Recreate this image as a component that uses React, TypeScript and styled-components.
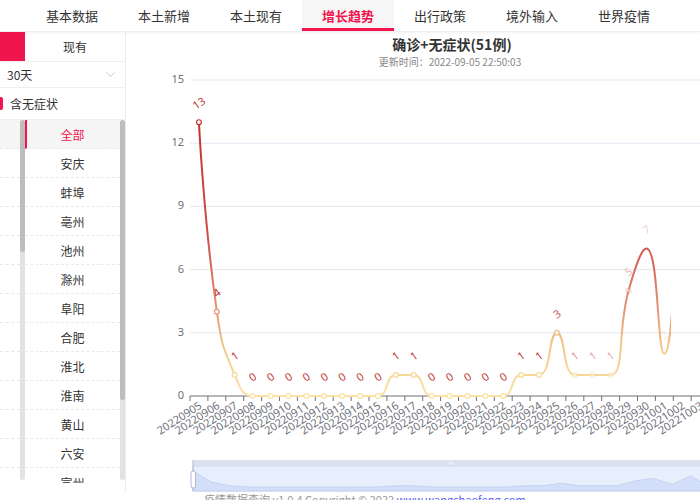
import React from "react";
import styled, { createGlobalStyle } from "styled-components";
import { ChevronDown } from "lucide-react";

const GlobalStyle = createGlobalStyle`
  body {
    margin: 0;
    background: #fff;
    font-family: "Noto Sans CJK SC", "Noto Sans", sans-serif;
    color: #333;
  }
`;

const tabs = ["基本数据", "本土新增", "本土现有", "增长趋势", "出行政策", "境外输入", "世界疫情"];
const cities = ["全部", "安庆", "蚌埠", "亳州", "池州", "滁州", "阜阳", "合肥", "淮北", "淮南", "黄山", "六安", "宣州"];

const values = [13, 4, 1, 0, 0, 0, 0, 0, 0, 0, 0, 1, 1, 0, 0, 0, 0, 0, 1, 1, 3, 1, 1, 1, 5, 7, 2, 9, 0];
const dates = values.map((_, i) => {
  const d = new Date(2022, 8, 5 + i);
  const mm = String(d.getMonth() + 1).padStart(2, "0");
  const dd = String(d.getDate()).padStart(2, "0");
  return `2022${mm}${dd}`;
});

// fade of labels / symbols while the line is still drawing in
const fade = [1, 1, 1, 1, 1, 1, 1, 1, 1, 1, 1, 1, 1, 1, 1, 1, 1, 1, 1, 1, 0.85, 0.55, 0.45, 0.4, 0.35, 0.25, 0.1, 0, 0];

const RED = "#f1154d";

const X0 = 190;
const STEP = 17.9;
const BASE = 396;
const UNIT = 21.067;
const px = (i: number) => X0 + STEP * (i + 0.5);
const py = (v: number) => BASE - v * UNIT;

const stops: [number, string][] = [
  [0, "#fbe2a4"],
  [1, "#f8d898"],
  [2.5, "#f2c588"],
  [4, "#e6977a"],
  [5.5, "#da7561"],
  [7.5, "#cf5049"],
  [13, "#c23531"],
  [15, "#c23531"],
];

const hex = (c: string) => [1, 3, 5].map((k) => parseInt(c.slice(k, k + 2), 16));
const colorAt = (v: number) => {
  for (let i = 0; i < stops.length - 1; i++) {
    const [a, ca] = stops[i];
    const [b, cb] = stops[i + 1];
    if (v >= a && v <= b) {
      const t = (v - a) / (b - a);
      const A = hex(ca);
      const B = hex(cb);
      const m = A.map((n, k) => Math.round(n + (B[k] - n) * t));
      return `rgb(${m[0]},${m[1]},${m[2]})`;
    }
  }
  return stops[stops.length - 1][1];
};

function smoothPath(pts: [number, number][], smooth = 0.5) {
  const out = [`M${pts[0][0]},${pts[0][1]}`];
  let c0x = pts[0][0];
  let c0y = pts[0][1];
  for (let i = 1; i < pts.length; i++) {
    const [x, y] = pts[i];
    const [ppx, ppy] = pts[i - 1];
    if (i === pts.length - 1) {
      out.push(`C${c0x},${c0y} ${x},${y} ${x},${y}`);
      break;
    }
    const [nx, ny] = pts[i + 1];
    let vx = nx - ppx;
    let vy = ny - ppy;
    const lp = Math.hypot(x - ppx, y - ppy);
    const ln = Math.hypot(nx - x, ny - y);
    const r = ln / (ln + lp);
    let ncx = x + vx * smooth * r;
    let ncy = y + vy * smooth * r;
    ncx = Math.max(Math.min(ncx, Math.max(nx, x)), Math.min(nx, x));
    ncy = Math.max(Math.min(ncy, Math.max(ny, y)), Math.min(ny, y));
    vx = ncx - x;
    vy = ncy - y;
    let cx = x - (vx * lp) / ln;
    let cy = y - (vy * lp) / ln;
    cx = Math.max(Math.min(cx, Math.max(ppx, x)), Math.min(ppx, x));
    cy = Math.max(Math.min(cy, Math.max(ppy, y)), Math.min(ppy, y));
    vx = x - cx;
    vy = y - cy;
    ncx = x + (vx * ln) / lp;
    ncy = y + (vy * ln) / lp;
    out.push(`C${c0x},${c0y} ${cx},${cy} ${x},${y}`);
    c0x = ncx;
    c0y = ncy;
  }
  return out.join(" ");
}

const Page = styled.div`
  width: 700px;
  overflow: hidden;
`;

const Nav = styled.nav`
  height: 31px;
  display: flex;
  padding-left: 26px;
  border-bottom: 1px solid #eee;
  box-shadow: 0 1px 3px rgba(0, 0, 0, 0.05);
`;

const Tab = styled.div<{ $active?: boolean }>`
  width: 92px;
  height: 31px;
  line-height: 31px;
  text-align: center;
  font-size: 13px;
  color: ${(p) => (p.$active ? RED : "#333")};
  font-weight: ${(p) => (p.$active ? 700 : 400)};
  background: ${(p) => (p.$active ? "#f6f6f6" : "transparent")};
  box-shadow: ${(p) => (p.$active ? `inset 0 -3px 0 ${RED}` : "none")};
`;

const Body = styled.div`
  display: flex;
`;

const Sidebar = styled.aside`
  width: 126px;
  flex: none;
  height: 460px;
  box-sizing: border-box;
  border-right: 1px solid #ececec;
  display: flex;
  flex-direction: column;
  font-size: 12px;
`;

const SegRow = styled.div`
  height: 29px;
  display: flex;
  border-bottom: 1px solid #eee;
`;

const SegActive = styled.div`
  width: 25px;
  background: ${RED};
`;

const SegItem = styled.div`
  flex: 1;
  display: flex;
  align-items: center;
  justify-content: center;
  color: #333;
`;

const SelectRow = styled.div`
  height: 25px;
  display: flex;
  align-items: center;
  justify-content: space-between;
  padding: 0 7px 0 7px;
  border-bottom: 1px solid #eee;
`;

const CheckRow = styled.div`
  height: 31px;
  display: flex;
  align-items: center;
  gap: 7px;
  border-bottom: 1px solid #eee;
`;

const CheckMark = styled.span`
  width: 3px;
  height: 13px;
  background: ${RED};
  border-radius: 0 2px 2px 0;
`;

const ListArea = styled.div`
  height: 363px;
  display: flex;
  overflow: hidden;
`;

const OuterCol = styled.div`
  width: 20px;
  flex: none;
`;

const OuterRow = styled.div<{ $active?: boolean }>`
  height: 28px;
  border-bottom: 1px dashed #e6e6e6;
  background: ${(p) => (p.$active ? "#f5f5f5" : "transparent")};
`;

const Track = styled.div`
  width: 5px;
  flex: none;
  height: 360px;
  border-radius: 3px;
  background: #e2e2e2;
  display: flex;
  flex-direction: column;
`;

const Thumb = styled.div<{ $h: number }>`
  height: ${(p) => p.$h}px;
  border-radius: 3px;
  background: #bdbdbd;
`;

const InnerList = styled.div`
  flex: 1;
`;

const City = styled.div<{ $active?: boolean }>`
  height: 29px;
  flex: none;
  display: flex;
  align-items: center;
  justify-content: center;
  box-sizing: border-box;
  border-bottom: 1px dashed #eaeaea;
  border-left: 2px solid ${(p) => (p.$active ? RED : "transparent")};
  padding-right: 2px;
  background: ${(p) => (p.$active ? "#f5f5f5" : "transparent")};
  color: ${(p) => (p.$active ? RED : "#333")};
`;

const Main = styled.main`
  flex: 1;
  min-width: 0;
  display: flex;
  flex-direction: column;
  align-items: stretch;
`;

const Title = styled.div`
  margin-top: 2px;
  line-height: 20px;
  font-size: 14px;
  font-weight: 700;
  color: #333;
  padding-left: 2px;
  text-align: center;
  width: 648px;
`;

const Subtitle = styled.div`
  margin-top: 1px;
  line-height: 14px;
  font-size: 10px;
  color: #888;
  text-align: center;
  width: 648px;
`;

const ChartSvg = styled.svg`
  display: block;
  flex: none;
`;

const AxisText = styled.text`
  font-size: 11px;
  fill: #6e7079;
  font-family: "Noto Sans", sans-serif;
`;

const ValueText = styled.text<{ $o: number }>`
  font-size: 11px;
  fill: #c23531;
  opacity: ${(p) => p.$o};
  font-family: "Noto Sans", sans-serif;
`;

const Footer = styled.div`
  padding-left: 78px;
  line-height: 14px;
  font-size: 11px;
  color: #999;
  white-space: nowrap;
`;

const FooterLink = styled.a`
  color: #5a64f5;
  text-decoration: none;
`;

function TrendChart() {
  const pts = values.map((v, i) => [px(i), py(v)] as [number, number]);
  const d = smoothPath(pts);
  const shadowStep = 516 / 28;
  const shadowPts = values.map((v, i) => `${193 + i * shadowStep},${487 - (v * 16) / 13}`);
  return (
    <ChartSvg width={574} height={423} viewBox="126 69 574 423">
      <defs>
        <linearGradient id="lineGrad" gradientUnits="userSpaceOnUse" x1="0" y1={BASE} x2="0" y2={py(15)}>
          {stops.map(([v, c]) => (
            <stop key={v} offset={v / 15} stopColor={c} />
          ))}
        </linearGradient>
        <clipPath id="drawClip">
          <rect x={126} y={69} width={545} height={340} />
        </clipPath>
      </defs>

      {[3, 6, 9, 12, 15].map((v) => (
        <line key={v} x1={X0} x2={720} y1={py(v)} y2={py(v)} stroke="#e6e8f2" strokeWidth={1} />
      ))}
      {[0, 3, 6, 9, 12, 15].map((v) => (
        <AxisText key={v} x={184} y={py(v)} textAnchor="end" dominantBaseline="middle">
          {v}
        </AxisText>
      ))}

      <line x1={X0} x2={720} y1={BASE} y2={BASE} stroke="#6e7079" strokeWidth={1} />
      {Array.from({ length: 30 }, (_, k) => (
        <line key={k} x1={X0 + STEP * k} x2={X0 + STEP * k} y1={BASE} y2={BASE + 5} stroke="#6e7079" />
      ))}
      {dates.map((t, i) => (
        <AxisText
          key={t}
          x={px(i) + 2}
          y={BASE + 9}
          textAnchor="end"
          dominantBaseline="middle"
          transform={`rotate(-33 ${px(i) + 2} ${BASE + 9})`}
        >
          {t}
        </AxisText>
      ))}

      <path d={d} fill="none" stroke="url(#lineGrad)" strokeWidth={2} clipPath="url(#drawClip)" />

      {values.map((v, i) =>
        fade[i] > 0.3 ? (
          <circle
            key={i}
            cx={px(i)}
            cy={py(v)}
            r={2.4}
            fill="#fff"
            stroke={colorAt(v)}
            strokeWidth={1.2}
            opacity={fade[i]}
          />
        ) : null
      )}
      {values.map((v, i) =>
        fade[i] > 0 ? (
          <ValueText
            key={i}
            $o={fade[i]}
            x={px(i)}
            y={py(v) - 15}
            textAnchor="middle"
            transform={`rotate(-35 ${px(i)} ${py(v) - 19})`}
          >
            {v}
          </ValueText>
        ) : null
      )}

      {/* data zoom slider */}
      <rect x={193} y={460} width={520} height={6} fill="#dbe2ef" />
      <rect x={193} y={466} width={520} height={25} fill="#e7eefc" stroke="#d2dbee" strokeWidth={1} />
      <polygon points={`193,491 ${shadowPts.join(" ")} 709,491`} fill="#d3dff9" stroke="#bfcdee" strokeWidth={0.8} />
      {[449, 451, 453].map((x) => (
        <line key={x} x1={x} x2={x} y1={461.5} y2={464.5} stroke="#f4f6fb" strokeWidth={0.8} />
      ))}
      <line x1={193} x2={193} y1={460} y2={491} stroke="#acb8d1" strokeWidth={1} />
      <rect x={191} y={471} width={4.5} height={17} rx={2} fill="#fff" stroke="#acb8d1" strokeWidth={1} />
    </ChartSvg>
  );
}

export default function App() {
  return (
    <Page>
      <GlobalStyle />
      <Nav>
        {tabs.map((t) => (
          <Tab key={t} $active={t === "增长趋势"}>
            {t}
          </Tab>
        ))}
      </Nav>
      <Body>
        <Sidebar>
          <SegRow>
            <SegActive />
            <SegItem>现有</SegItem>
          </SegRow>
          <SelectRow>
            <span>30天</span>
            <ChevronDown size={15} color="#bbb" strokeWidth={1.3} />
          </SelectRow>
          <CheckRow>
            <CheckMark />
            <span>含无症状</span>
          </CheckRow>
          <ListArea>
            <OuterCol>
              {cities.map((c, i) => (
                <OuterRow key={c} $active={i === 0} />
              ))}
            </OuterCol>
            <Track>
              <Thumb $h={132} />
            </Track>
            <InnerList>
              {cities.map((c, i) => (
                <City key={c} $active={i === 0}>
                  {c}
                </City>
              ))}
            </InnerList>
            <Track>
              <Thumb $h={280} />
            </Track>
          </ListArea>
        </Sidebar>
        <Main>
          <Title>确诊+无症状(51例)</Title>
          <Subtitle>更新时间：2022-09-05 22:50:03</Subtitle>
          <TrendChart />
          <Footer>
            疫情数据查询 v1.0.4 Copyright © 2022 <FooterLink href="#">www.wangchaofeng.com</FooterLink>
          </Footer>
        </Main>
      </Body>
    </Page>
  );
}
